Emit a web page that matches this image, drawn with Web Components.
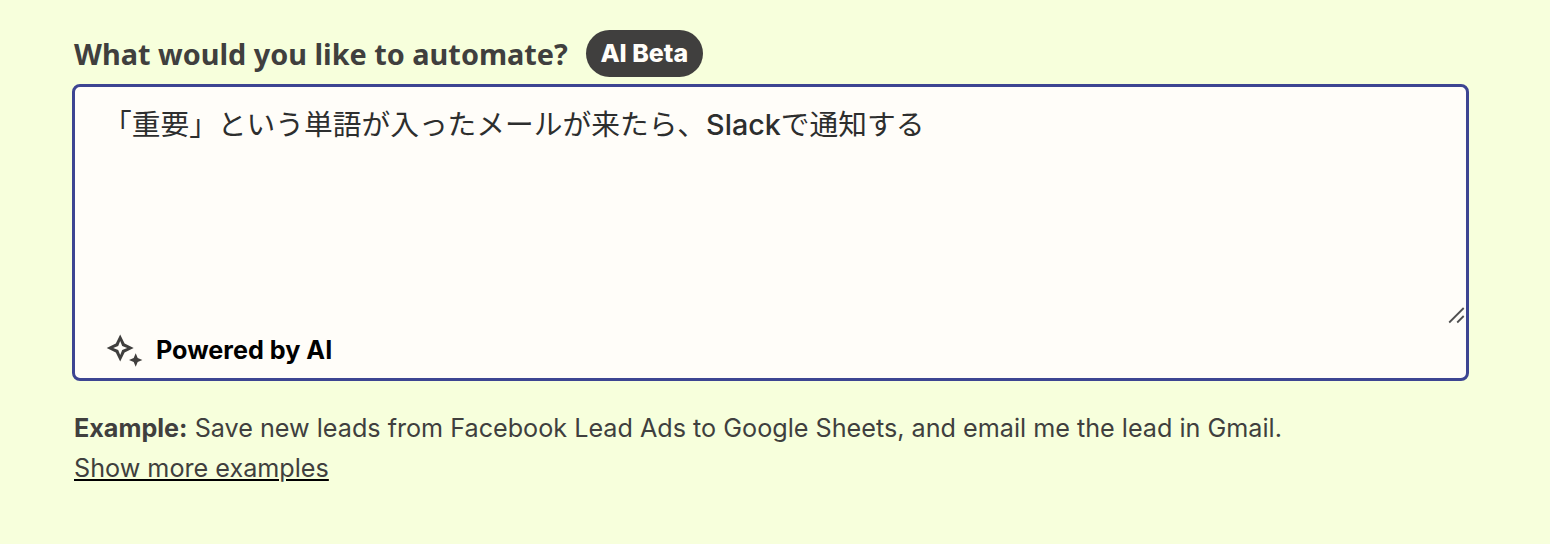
<!DOCTYPE html>
<html lang="en">
<head>
<meta charset="utf-8">
<title>AI Beta</title>
<style>
  body {
    margin: 0;
    background: #f7ffdc;
    color: #403f3e;
    font-family: Inter, "Noto Sans CJK JP", sans-serif;
  }
  .latin {
    font-weight: 500;
  }
</style>
</head>
<body>
<automate-form>
  <field-label slot="label">What would you like to automate?<pill-badge slot="badge">AI Beta</pill-badge></field-label>
  <prompt-box>「重要」という単語が入ったメールが来たら、<span class="latin">Slack</span>で通知する<span slot="footer">Powered by AI</span></prompt-box>
  <example-hint slot="hint">Save new leads from Facebook Lead Ads to Google Sheets, and email me the lead in Gmail.<span slot="more">Show more examples</span></example-hint>
</automate-form>

<script>
class AutomateForm extends HTMLElement {
  constructor() {
    super();
    this.attachShadow({ mode: "open" });
  }

  connectedCallback() {
    this.shadowRoot.innerHTML = `
      <style>
        :host {
          display: flex;
          flex-direction: column;
          box-sizing: border-box;
          height: 544px;
          padding: 30px 81px 0 72px;
        }
      </style>
      <slot name="label"></slot>
      <slot></slot>
      <slot name="hint"></slot>
    `;
  }
}

class FieldLabel extends HTMLElement {
  constructor() {
    super();
    this.attachShadow({ mode: "open" });
  }

  connectedCallback() {
    this.shadowRoot.innerHTML = `
      <style>
        :host {
          display: flex;
          align-items: center;
          gap: 18px;
          height: 47px;
          margin-bottom: 7px;
          padding-left: 2px;
        }
        .text {
          font: 700 28.85px/47px "Noto Sans", sans-serif;
          white-space: nowrap;
        }
      </style>
      <span class="text"><slot></slot></span>
      <slot name="badge"></slot>
    `;
  }
}

class PillBadge extends HTMLElement {
  constructor() {
    super();
    this.attachShadow({ mode: "open" });
  }

  connectedCallback() {
    this.shadowRoot.innerHTML = `
      <style>
        :host {
          display: flex;
          justify-content: center;
          box-sizing: border-box;
          width: 117px;
          height: 47px;
          border-radius: 24px;
          background: #403f3e;
          color: #fffdf9;
          font: 800 25px/46px Inter, sans-serif;
          white-space: nowrap;
        }
      </style>
      <slot></slot>
    `;
  }
}

class PromptBox extends HTMLElement {
  constructor() {
    super();
    this.attachShadow({ mode: "open" });
  }

  connectedCallback() {
    this.shadowRoot.innerHTML = `
      <style>
        :host {
          display: flex;
          flex-direction: column;
          box-sizing: border-box;
          height: 297px;
          border: 3px solid #3d4592;
          border-radius: 8px;
          background: #fffdf9;
        }
        .area {
          display: flex;
          flex: 1;
          padding: 17px 0 0 28px;
          color: #2d2e2e;
          font: 400 28.72px/42px Inter, "Noto Sans CJK JP", sans-serif;
        }
        .text {
          flex: 1;
        }
        .grip {
          align-self: flex-end;
          width: 19px;
          height: 19px;
        }
        .footer {
          display: flex;
          align-items: center;
          box-sizing: border-box;
          gap: 12px;
          height: 53px;
          padding: 0 0 2px 31px;
          color: #000;
          font: 700 25.2px/51px Inter, sans-serif;
        }
        .sparkle {
          width: 38px;
          height: 37px;
        }
      </style>
      <div class="area">
        <span class="text"><slot></slot></span>
        <svg class="grip" viewBox="0 0 19 19" fill="none" stroke="#505050" stroke-width="1.8">
          <path d="M2.200 16.500L16.700 2M10.200 16.500L16.700 10"/>
        </svg>
      </div>
      <div class="footer">
        <svg class="sparkle" viewBox="0 0 38 37" fill="#403f3e">
          <path fill-rule="evenodd" d="M14.200 2.500L18.600 11.600L27.700 16L18.600 20.400L14.200 29.500L9.800 20.400L.7 16L9.800 11.600ZM14.200 9L12.200 14L7.200 16L12.200 18L14.200 23L16.200 18L21.200 16L16.200 14Z"/>
          <path d="M29.700 21.300L31.700 26L36.400 28L31.700 30L29.700 34.700L27.700 30L23 28L27.700 26Z"/>
        </svg>
        <slot name="footer"></slot>
      </div>
    `;
  }
}

class ExampleHint extends HTMLElement {
  constructor() {
    super();
    this.attachShadow({ mode: "open" });
  }

  connectedCallback() {
    this.shadowRoot.innerHTML = `
      <style>
        :host {
          display: block;
          margin-top: 27px;
          padding-left: 2px;
          font: 400 25.18px/40px Inter, sans-serif;
          white-space: nowrap;
        }
        .more {
          text-decoration: underline #000 2px;
          text-underline-offset: 2px;
        }
      </style>
      <div><b>Example:</b> <span class="text"><slot></slot></span></div>
      <span class="more"><slot name="more"></slot></span>
    `;
  }
}

customElements.define("automate-form", AutomateForm);
customElements.define("field-label", FieldLabel);
customElements.define("pill-badge", PillBadge);
customElements.define("prompt-box", PromptBox);
customElements.define("example-hint", ExampleHint);
</script>
</body>
</html>
